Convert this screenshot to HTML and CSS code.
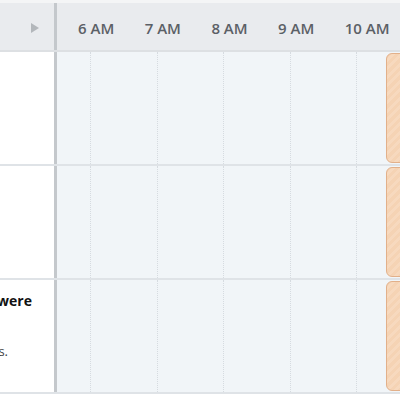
FILE: index.html
```html
<!DOCTYPE html>
<html>
<head>
<meta charset="utf-8">
<link rel="stylesheet" href="styles.css">
</head>
<body>
<div class="app">
  <div class="topstrip"></div>
  <div class="header">
    <div class="side side-head">
      <svg class="arrow" width="8" height="10" viewBox="0 0 8 10"><polygon points="0,0 8,5 0,10" fill="#b3b7bb"/></svg>
    </div>
    <div class="hours">
      <span class="hour">6 AM</span>
      <span class="hour">7 AM</span>
      <span class="hour">8 AM</span>
      <span class="hour">9 AM</span>
      <span class="hour">10 AM</span>
    </div>
  </div>
  <div class="row">
    <div class="side"></div>
    <div class="timeline">
      <div class="cell first"></div><div class="cell"></div><div class="cell"></div><div class="cell"></div><div class="cell"></div><div class="cell"></div>
      <div class="event"></div>
    </div>
  </div>
  <div class="row">
    <div class="side"></div>
    <div class="timeline">
      <div class="cell first"></div><div class="cell"></div><div class="cell"></div><div class="cell"></div><div class="cell"></div><div class="cell"></div>
      <div class="event"></div>
    </div>
  </div>
  <div class="row">
    <div class="side side-text">
      <div class="line bold">Tasks that were</div>
      <div class="line gap"></div>
      <div class="line small">in these rows.</div>
    </div>
    <div class="timeline">
      <div class="cell first"></div><div class="cell"></div><div class="cell"></div><div class="cell"></div><div class="cell"></div><div class="cell"></div>
      <div class="event"></div>
    </div>
  </div>
</div>
</body>
</html>
```
FILE: styles.css
```css
html, body {
  margin: 0;
  padding: 0;
  background: #ffffff;
}
.app {
  width: 400px;
  height: 400px;
  overflow: hidden;
  font-family: "Open Sans", "Liberation Sans", sans-serif;
  background: #ffffff;
}
.topstrip {
  height: 3px;
  background: #f4f5f6;
}
.header {
  display: flex;
  height: 47px;
  background: #e9ebee;
  border-bottom: 2px solid #dde0e3;
}
.side {
  width: 54px;
  flex: 0 0 54px;
  border-right: 3px solid #c4c8cc;
  background: #ffffff;
  overflow: hidden;
}
.side-head {
  background: #e9ebee;
  display: flex;
  align-items: center;
  justify-content: flex-end;
}
.arrow {
  display: block;
  margin-top: 2px;
  margin-right: 15px;
}
.hours {
  flex: 1;
  display: flex;
  align-items: center;
  padding-left: 21px;
  padding-top: 3px;
  overflow: hidden;
}
.hour {
  flex: 0 0 66.7px;
  font-size: 15px;
  font-weight: 600;
  color: #5b6066;
  white-space: nowrap;
}
.row {
  display: flex;
  height: 112px;
  border-bottom: 2px solid #dfe3e7;
}
.timeline {
  flex: 1;
  position: relative;
  display: flex;
  background: #f1f5f8;
  overflow: hidden;
}
.cell {
  flex: 0 0 66.6px;
  box-sizing: border-box;
  border-left: 1px dotted #d6dbe0;
}
.cell.first {
  flex: 0 0 33px;
  border-left: none;
}
.event {
  position: absolute;
  left: 329px;
  top: 1px;
  bottom: 1px;
  width: 40px;
  box-sizing: border-box;
  border: 1px solid #e2b08a;
  border-radius: 6px;
  background: repeating-linear-gradient(135deg, #f5d3b4 0 3px, #f7d9be 3px 6px);
}
.side-text {
  display: flex;
  flex-direction: column;
  align-items: flex-end;
  padding-top: 11px;
  height: 101px;
}
.line {
  white-space: nowrap;
  color: #333333;
}
.bold {
  font-size: 14px;
  font-weight: 700;
  color: #111111;
  padding-right: 22px;
  line-height: 20px;
}
.gap {
  height: 31px;
}
.small {
  font-size: 13px;
  color: #444444;
  padding-right: 46px;
  line-height: 18px;
}
```
